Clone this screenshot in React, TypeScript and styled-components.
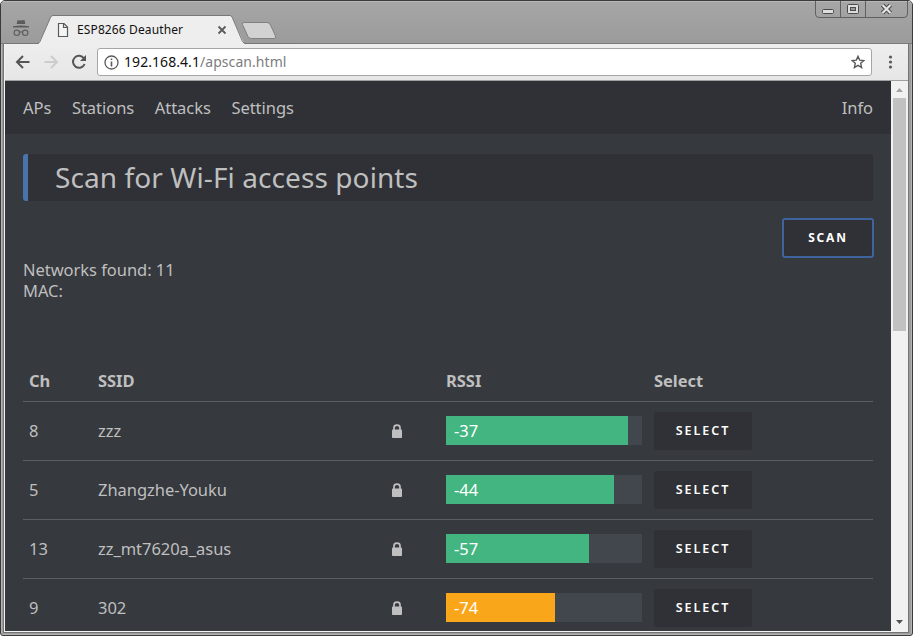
import React from "react";
import styled, { createGlobalStyle } from "styled-components";

const Global = createGlobalStyle`
  * { box-sizing: border-box; }
  body { margin: 0; background: #fff; overflow: hidden; font-family: "Noto Sans", "Open Sans", sans-serif; }
  button { font-family: inherit; margin: 0; }
`;

const Window = styled.div`
  width: 913px;
  height: 636px;
  display: flex;
  flex-direction: column;
  background: #9b9b9b;
  border: 1px solid #3a3a3a;
  border-radius: 5px 5px 3px 3px;
  overflow: hidden;
  box-shadow: inset 0 0 0 1px #b4b4b4;
`;

const TitleBar = styled.header`
  height: 43px;
  flex: none;
  display: flex;
  align-items: flex-end;
  padding-left: 3px;
  position: relative;
  background: linear-gradient(#a6a6a6, #9b9b9b);
  box-shadow: inset 0 1px 0 #b8b8b8, inset 0 -1px 0 #7b7b7b;
`;

const TabArt = styled.svg`
  position: absolute;
  left: 0;
  top: 0;
`;

const TabTitle = styled.span`
  position: relative;
  margin: 0 0 4px 73px;
  font-size: 12px;
  line-height: 20px;
  letter-spacing: 0.12px;
  color: #111;
`;

const WindowControls = styled.div`
  position: absolute;
  right: 3px;
  top: 0;
  width: 94px;
  height: 18px;
`;

const Body = styled.div`
  flex: 1;
  min-height: 0;
  display: flex;
  flex-direction: column;
  margin: 0 4px 3px 3px;
  border-left: 1px solid #f4f4f4;
  border-bottom: 1px solid #f4f4f4;
  box-shadow: 0 0 0 1px #757575;
`;

const Toolbar = styled.div`
  height: 37px;
  flex: none;
  display: flex;
  align-items: center;
  background: linear-gradient(#eeeeee, #e6e6e6);
  border-bottom: 1px solid #a0a0a0;
`;

const NavIcons = styled.svg`
  flex: none;
`;

const Address = styled.div`
  width: 775px;
  height: 28px;
  display: flex;
  align-items: center;
  padding: 0 6px;
  background: #fff;
  border: 1px solid #a6a6a6;
  border-radius: 3px;
`;

const Url = styled.span`
  flex: 1;
  margin-left: 5px;
  font-size: 14px;
  line-height: 24px;
  letter-spacing: 0.06px;
  color: #111;
`;

const UrlPath = styled.span`
  color: #7d7d7d;
`;

const Menu = styled.svg`
  margin-left: 14px;
`;

const Viewport = styled.div`
  flex: 1;
  min-height: 0;
  display: flex;
`;

const Page = styled.div`
  width: 886px;
  overflow: hidden;
  background: #36393e;
  color: #bfbfbf;
  font-size: 16.5px;
  line-height: 21px;
  letter-spacing: -0.04px;
`;

const Nav = styled.nav`
  height: 53px;
  display: flex;
  align-items: center;
  gap: 20.6px;
  padding: 0 18px 1px;
  background: #2f3136;
`;

const NavLink = styled.a<{ $end?: boolean }>`
  margin-left: ${(p) => (p.$end ? "auto" : "0")};
`;

const Main = styled.main`
  padding: 20px 18px 0;
`;

const Heading = styled.h1`
  height: 47px;
  margin: 0;
  padding-left: 27px;
  background: #2f3136;
  border-left: 5px solid #4974a9;
  border-radius: 3px;
  font-size: 28px;
  font-weight: 400;
  line-height: 46px;
  letter-spacing: 0.09px;
`;

const Actions = styled.div`
  display: flex;
  justify-content: flex-end;
  margin: 17px -1px 1px 0;
`;

const Button = styled.button<{ $outlined?: boolean }>`
  width: ${(p) => (p.$outlined ? 92 : 98)}px;
  height: ${(p) => (p.$outlined ? 40 : 38)}px;
  padding: 0;
  border: ${(p) => (p.$outlined ? "2px solid #3e639d" : "0")};
  border-radius: 3px;
  background: #2f3136;
  color: #fff;
  font-size: ${(p) => (p.$outlined ? 12 : 12.5)}px;
  font-weight: ${(p) => (p.$outlined ? 700 : 600)};
  line-height: 20px;
  letter-spacing: ${(p) => (p.$outlined ? 1.8 : 2)}px;
`;

const Summary = styled.p`
  height: 103px;
  margin: 0;
`;

const Row = styled.div<{ $head?: boolean }>`
  display: grid;
  grid-template-columns: 69px 293px 55px 208px 1fr;
  align-items: center;
  height: ${(p) => (p.$head ? 40 : 59)}px;
  border-bottom: 1px solid #5d5e60;
  font-weight: ${(p) => (p.$head ? 700 : 400)};
`;

const Cell = styled.div`
  display: flex;
  padding: 0 6px;
`;

const TextCell = styled(Cell)`
  padding-bottom: 2px;
`;

const Track = styled.div`
  width: 196px;
  height: 29px;
  margin-bottom: 1px;
  background: #42464d;
`;

const Fill = styled.div<{ $weak?: boolean }>`
  height: 100%;
  padding-left: 8px;
  line-height: 30px;
  color: #fff;
  background: ${(p) => (p.$weak ? "#faa61a" : "#43b581")};
`;

const Scrollbar = styled.div`
  width: 17px;
  display: flex;
  flex-direction: column;
  align-items: center;
  justify-content: space-between;
  background: #f1f1f1;
`;

const Thumb = styled.div`
  width: 13px;
  height: 233px;
  margin-bottom: auto;
  background: #c1c1c1;
`;

const networks = [
  { ch: 8, ssid: "zzz", rssi: -37, fill: 182 },
  { ch: 5, ssid: "Zhangzhe-Youku", rssi: -44, fill: 168 },
  { ch: 13, ssid: "zz_mt7620a_asus", rssi: -57, fill: 143 },
  { ch: 9, ssid: "302", rssi: -74, fill: 109 },
];

const Lock = () => (
  <svg width="12" height="14" viewBox="0 0 12 14">
    <path d="M3 7V3.800Q3 1.200 6 1.200T9 3.800V7" fill="none" stroke="#bfbfbf" strokeWidth="1.700" />
    <rect x="1" y="5.500" width="10" height="8.500" rx="0.800" fill="#bfbfbf" />
  </svg>
);

export default function App() {
  return (
    <>
      <Global />
      <Window>
        <TitleBar>
          <TabArt width="300" height="43" viewBox="1 1 300 43">
            <path d="M38.500 44L50.500 17.500Q51.300 15.500 53 15.500H230Q231.500 15.500 232.300 17.500L244.500 44z" fill="#eee" />
            <path d="M4 43.500H37Q39 43.500 40 41.500L50.500 17.500Q51.300 15.500 53 15.500H230Q231.500 15.500 232.300 17.500L242.500 41.500Q243.500 43.500 246 43.500H302" fill="none" stroke="#777" />
            <path d="M244 22.500H267Q269.500 22.500 270.500 25L275.500 36Q276.500 38.500 274 38.500H251.500Q249 38.500 248 36.500L242.500 24.500Q241.800 22.500 244 22.500z" fill="#d2d2d2" stroke="#808080" />
            <path d="M17.700 20.200L20 20.600L22.300 20.200L24.500 20L25.300 24H16.700L17.500 20zM13 26.200Q21 25 29 26.200V27.500H13z" fill="#5b5b5b" />
            <g fill="none" stroke="#606060" strokeWidth="1.200"><circle cx="16.800" cy="32.800" r="2.700" /><circle cx="25.200" cy="32.800" r="2.700" /><path d="M19.500 32.300Q21 31.300 22.500 32.300" /></g>
            <path d="M58.500 23.500H64L67.500 27V36.500H58.500zM63.500 23.500V27.500H67.500" fill="#f5f5f5" stroke="#5a5a5a" strokeWidth="1.200" />
            <path d="M218.500 26.500L225.500 33.500M225.500 26.500L218.500 33.500" stroke="#5a5a5a" strokeWidth="1.800" />
          </TabArt>
          <TabTitle>ESP8266 Deauther</TabTitle>
          <WindowControls>
            <svg width="94" height="18" viewBox="815 1 94 18">
              <path d="M815.500 1V14Q815.500 17.500 819 17.500H904Q907.500 17.500 907.500 14V1M840.500 1V17M865.500 1V17" fill="none" stroke="#606060" />
              <rect x="822.500" y="9.500" width="11" height="4" rx="1" fill="#ddd" stroke="#4b4b4b" />
              <rect x="847.500" y="4.500" width="11" height="9" rx="1" fill="#ddd" stroke="#4b4b4b" />
              <rect x="850.500" y="7.500" width="5" height="3" fill="#999" stroke="#4b4b4b" />
              <path d="M882.500 5L890.500 13M890.500 5L882.500 13" stroke="#4b4b4b" strokeWidth="4.300" />
              <path d="M882.500 5L890.500 13M890.500 5L882.500 13" stroke="#e4e4e4" strokeWidth="2.200" />
            </svg>
          </WindowControls>
        </TitleBar>
        <Body>
          <Toolbar>
            <NavIcons width="92" height="36" viewBox="5 44 92 36">
              <path d="M29.500 62H17.500M23 56L17 62L23 68" fill="none" stroke="#555" strokeWidth="2" />
              <path d="M44.500 62H56.500M51 56L57 62L51 68" fill="none" stroke="#ccc" strokeWidth="2" />
              <path d="M84 58.500A6 6 0 1 0 84.600 64" fill="none" stroke="#555" strokeWidth="2" />
              <path d="M86 55V61H80z" fill="#555" />
            </NavIcons>
            <Address>
              <svg width="15" height="15" viewBox="0 0 15 15">
                <circle cx="7.500" cy="7.500" r="6.500" fill="none" stroke="#5a5a5a" strokeWidth="1.300" />
                <path d="M6.700 3.500H8.300V5.100H6.700zM6.700 6.500H8.300V11.500H6.700z" fill="#5a5a5a" />
              </svg>
              <Url>192.168.4.1<UrlPath>/apscan.html</UrlPath></Url>
              <svg width="14" height="14" viewBox="0 0 14 14">
                <path d="M7 1.300L8.650 5.100L12.900 5.500L9.700 8.300L10.600 12.500L7 10.300L3.400 12.500L4.300 8.300L1.100 5.500L5.350 5.100z" fill="none" stroke="#5a5a5a" strokeWidth="1.400" />
              </svg>
            </Address>
            <Menu width="8" height="16" viewBox="0 0 8 16" fill="#5a5a5a">
              <circle cx="4.500" cy="3" r="1.600" /><circle cx="4.500" cy="8" r="1.600" /><circle cx="4.500" cy="13" r="1.600" />
            </Menu>
          </Toolbar>
          <Viewport>
            <Page>
              <Nav>
                <NavLink>APs</NavLink>
                <NavLink>Stations</NavLink>
                <NavLink>Attacks</NavLink>
                <NavLink>Settings</NavLink>
                <NavLink $end>Info</NavLink>
              </Nav>
              <Main>
                <Heading>Scan for Wi-Fi access points</Heading>
                <Actions><Button $outlined>SCAN</Button></Actions>
                <Summary>Networks found: 11<br />MAC:</Summary>
                <Row $head>
                  <TextCell>Ch</TextCell><TextCell>SSID</TextCell><TextCell /><TextCell>RSSI</TextCell><TextCell>Select</TextCell>
                </Row>
                {networks.map((n) => (
                  <Row key={n.ssid}>
                    <TextCell>{n.ch}</TextCell>
                    <TextCell>{n.ssid}</TextCell>
                    <Cell><Lock /></Cell>
                    <Cell><Track><Fill $weak={n.rssi < -60} style={{ width: n.fill }}>{n.rssi}</Fill></Track></Cell>
                    <Cell><Button>SELECT</Button></Cell>
                  </Row>
                ))}
              </Main>
            </Page>
            <Scrollbar>
              <svg width="17" height="17"><path d="M5 11L8.500 7L12 11z" fill="#a3a3a3" /></svg>
              <Thumb />
              <svg width="17" height="17"><path d="M5 6L8.500 10L12 6z" fill="#505050" /></svg>
            </Scrollbar>
          </Viewport>
        </Body>
      </Window>
    </>
  );
}
